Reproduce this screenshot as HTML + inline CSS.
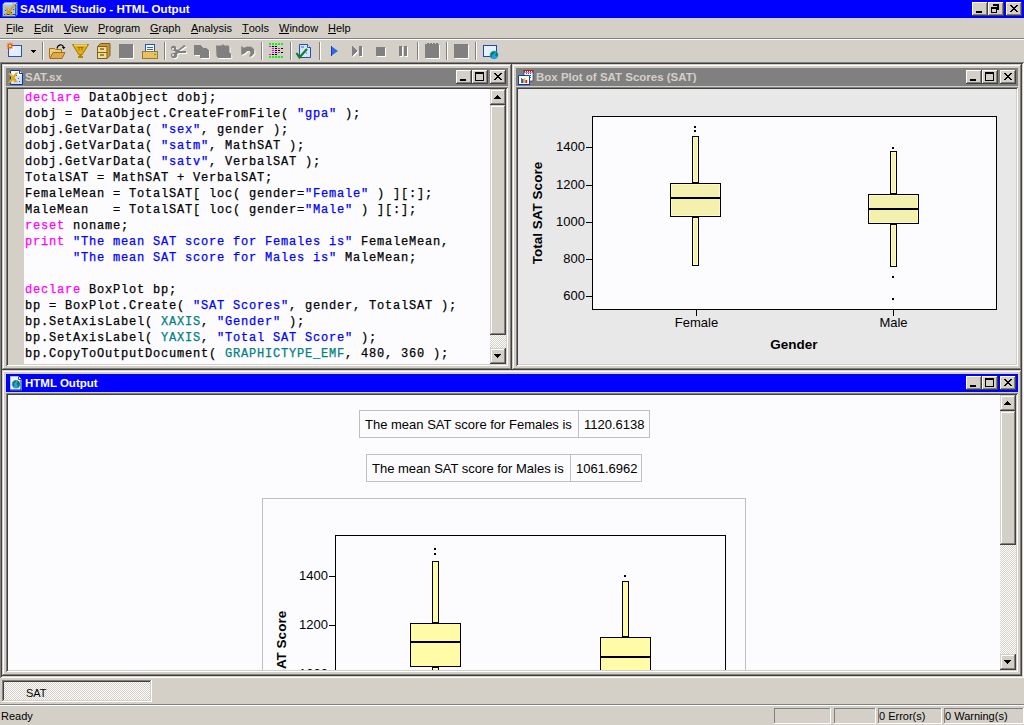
<!DOCTYPE html>
<html><head><meta charset="utf-8">
<style>
*{margin:0;padding:0;box-sizing:border-box}
html,body{width:1024px;height:725px;overflow:hidden;background:#d4d0c8;font-family:"Liberation Sans",sans-serif;font-size:11px;color:#000}
.a{position:absolute}
.raised{box-shadow:inset -1px -1px #404040,inset 1px 1px #d4d0c8,inset -2px -2px #808080,inset 2px 2px #fff;background:#d4d0c8}
.btn{box-shadow:inset -1px -1px #404040,inset 1px 1px #fff,inset -2px -2px #808080;background:#d4d0c8}
.sunken{box-shadow:inset 1px 1px #808080,inset -1px -1px #fff,inset 2px 2px #404040,inset -2px -2px #d4d0c8}
.thin{box-shadow:inset -1px -1px #fff,inset 1px 1px #808080}
.dither{background-color:#d4d0c8;background-image:repeating-conic-gradient(#fff 0 25%,#d4d0c8 0 50%);background-size:2px 2px}
.cap{font-weight:bold;font-size:11.5px;line-height:13px;white-space:nowrap}
.menu span{position:absolute;top:21px;line-height:14px;white-space:nowrap}
.menu u{text-decoration:none;border-bottom:1px solid #000;display:inline-block;line-height:10px;height:11px}
.u{text-decoration:underline;text-underline-offset:2px}
pre{font-family:"Liberation Mono",monospace;font-size:12px;letter-spacing:0.8px;line-height:16px;-webkit-text-stroke:0.25px currentColor}
.k{color:#ff00ff}.s{color:#0000ff}.c{color:#008080}
</style></head><body>
<!-- App title bar -->
<div class="a" style="left:0;top:0;width:1024px;height:18px;background:#0000ff"></div>
<svg class="a" style="left:2px;top:1px" width="16" height="16">
<path d="M0.5 3.5l2-2h13v12l-2 2h-13z" fill="#a4c4ee" stroke="#2a5cb8" stroke-width="1"/>
<path d="M1 3.5l2-2h12.5l-2 2z" fill="#d4e4fa"/>
<path d="M13.5 3.5v12M13.5 3.5l2-2" stroke="#2a5cb8" stroke-width="1" fill="none"/>
<path d="M14 4h1v10h-1z" fill="#6e98d8"/>
<path d="M2 13.5h11.5" stroke="#0a3c9c"/>
<path d="M2.5 6h3.5l1.6 2.6 2-2.6h2.2l-3.2 3.8 2.8 4.7h-3.4l-1.5-2.7-2.2 2.7H2l3.4-4.3z" fill="#d8980a"/>
<path d="M3.5 6.8h2l1.8 3" stroke="#f8d048" stroke-width="0.9" fill="none"/>
<path d="M10 2.5h2.6q1 0.3 0.5 1.5l-1.5 1.5h2v1.2h-3.8v-1l1.8-1.9q0.3-0.5-0.3-0.5h-1.4z" fill="#e0a410"/>
<path d="M9 11h1v1H9zM11 8h1v1h-1zM3 9h1v1H3z" fill="#1a4cb0"/>
</svg>
<div class="a cap" style="left:20px;top:2px;color:#fff;font-size:11.6px">SAS/IML Studio - HTML Output</div>
<div class="a btn" style="left:972px;top:2px;width:16px;height:14px"></div><svg class="a" style="left:972px;top:2px" width="16" height="14" shape-rendering="crispEdges"><path d="M4 9h6v2H4z"/></svg>
<div class="a btn" style="left:988px;top:2px;width:16px;height:14px"></div><svg class="a" style="left:988px;top:2px" width="16" height="14" shape-rendering="crispEdges"><path d="M5 2h6v6H9V4H5zM3 5h6v6H3zM4 7v3h4V7z" fill-rule="evenodd"/></svg>
<div class="a btn" style="left:1006px;top:2px;width:16px;height:14px"></div><svg class="a" style="left:1006px;top:2px" width="16" height="14" shape-rendering="crispEdges"><path d="M4 3h2v1h1v1h2V4h1V3h2v1h-1v1h-1v1h-1v1h1v1h1v1h1v1h-2V9H9V8H7v1H6v1H4V9h1V8h1V7h1V6H6V5H5V4H4z"/></svg>


<!-- Menu -->
<div class="a menu" style="left:0;top:0;width:1024px;height:38px">
<span style="left:6px"><u>F</u>ile</span><span style="left:34px"><u>E</u>dit</span><span style="left:64px"><u>V</u>iew</span><span style="left:98px"><u>P</u>rogram</span><span style="left:150px"><u>G</u>raph</span><span style="left:191px"><u>A</u>nalysis</span><span style="left:242px"><u>T</u>ools</span><span style="left:279px"><u>W</u>indow</span><span style="left:328px"><u>H</u>elp</span>
</div>
<div class="a" style="left:0;top:38px;width:1024px;height:1px;background:#808080"></div>
<div class="a" style="left:0;top:39px;width:1024px;height:1px;background:#fff"></div>

<!-- Toolbar -->
<svg class="a" style="left:0;top:40px" width="510" height="22" shape-rendering="crispEdges">
<rect x="42" y="2" width="1" height="18" fill="#808080"/><rect x="43" y="2" width="1" height="18" fill="#fff"/>
<rect x="164" y="2" width="1" height="18" fill="#808080"/><rect x="165" y="2" width="1" height="18" fill="#fff"/>
<rect x="261" y="2" width="1" height="18" fill="#808080"/><rect x="262" y="2" width="1" height="18" fill="#fff"/>
<rect x="290" y="2" width="1" height="18" fill="#808080"/><rect x="291" y="2" width="1" height="18" fill="#fff"/>
<rect x="319" y="2" width="1" height="18" fill="#808080"/><rect x="320" y="2" width="1" height="18" fill="#fff"/>
<rect x="417" y="2" width="1" height="18" fill="#808080"/><rect x="418" y="2" width="1" height="18" fill="#fff"/>
<rect x="446" y="2" width="1" height="18" fill="#808080"/><rect x="447" y="2" width="1" height="18" fill="#fff"/>
<rect x="475" y="2" width="1" height="18" fill="#808080"/><rect x="476" y="2" width="1" height="18" fill="#fff"/>
<g transform="translate(1,1)" fill="#fff"><rect x="119" y="4" width="14" height="14"/></g><g fill="#808080"><rect x="119" y="4" width="14" height="14"/></g>
<g transform="translate(1,1)" fill="#fff"><rect x="454" y="4" width="14" height="14"/></g><g fill="#808080"><rect x="454" y="4" width="14" height="14"/></g>
<g transform="translate(1,1)" fill="#fff"><path d="M425 4h14v14h-14z M427 3h2v1h-2z M430 3h2v1h-2z M433 3h2v1h-2z M436 3h2v1h-2z"/></g><g fill="#808080"><path d="M425 4h14v14h-14z M427 3h2v1h-2z M430 3h2v1h-2z M433 3h2v1h-2z M436 3h2v1h-2z"/></g>
<g transform="translate(1,1)" fill="#fff"><rect x="376" y="7" width="9" height="9"/></g><g fill="#808080"><rect x="376" y="7" width="9" height="9"/></g>
<g transform="translate(1,1)" fill="#fff"><path d="M399 6h3v10h-3z M404 6h3v10h-3z"/></g><g fill="#808080"><path d="M399 6h3v10h-3z M404 6h3v10h-3z"/></g>
<g transform="translate(1,1)" fill="#fff"><path d="M352 6v10l6-5z M359 6h3v10h-3z"/></g><g fill="#808080"><path d="M352 6v10l6-5z M359 6h3v10h-3z"/></g>
<g transform="translate(1,1)" fill="#fff"><path d="M194 5h6l3 3h3l3 3v7h-9v-3h-6z"/></g><g fill="#808080"><path d="M194 5h6l3 3h3l3 3v7h-9v-3h-6z"/></g>
<g transform="translate(1,1)" fill="#fff"><path d="M216 5.5h5.5l1-1h1l1 1h4l1 1.5v5.3l1.7 1.7v4h-13l-1.7-1.7z" shape-rendering="auto"/></g><g fill="#808080"><path d="M216 5.5h5.5l1-1h1l1 1h4l1 1.5v5.3l1.7 1.7v4h-13l-1.7-1.7z" shape-rendering="auto"/></g>
<g transform="translate(1,1)" fill="#fff"><path d="M184 5l2 1-7 5 7 0v2h-7l-2 1q1 3-2 4t-4-2 3-3l2-1-2-1q-3 0-3-3t4-2q2 1 1 3l2 1zM173 8a1 1 0 1 0 0.1 0zM173 14a1 1 0 1 0 0.1 0z" fill-rule="evenodd" shape-rendering="auto"/></g><g fill="#808080"><path d="M184 5l2 1-7 5 7 0v2h-7l-2 1q1 3-2 4t-4-2 3-3l2-1-2-1q-3 0-3-3t4-2q2 1 1 3l2 1zM173 8a1 1 0 1 0 0.1 0zM173 14a1 1 0 1 0 0.1 0z" fill-rule="evenodd" shape-rendering="auto"/></g>
<g transform="translate(1,1)" fill="#fff"><path d="M241.3 6.1l2.7 1.7 3.4-1.4 4.1 0.4 2.8 2.7v4.1l-2.8 2.8-2 0.3v-1.4l1.3-2.4-1.3-2h-2.1l-2.7 2.7-3.4 1.4z" shape-rendering="auto"/></g><g fill="#808080"><path d="M241.3 6.1l2.7 1.7 3.4-1.4 4.1 0.4 2.8 2.7v4.1l-2.8 2.8-2 0.3v-1.4l1.3-2.4-1.3-2h-2.1l-2.7 2.7-3.4 1.4z" shape-rendering="auto"/></g>
<path d="M331 6v10l7-5z" fill="#2a6ae8" shape-rendering="auto"/><path d="M331 6v10l1-1v-8z" fill="#1040b0"/>
<rect x="269" y="3" width="2" height="2" fill="#00ff00"/><rect x="269" y="16" width="2" height="2" fill="#00ff00"/>
<rect x="272" y="3" width="2" height="2" fill="#00ff00"/><rect x="272" y="16" width="2" height="2" fill="#00ff00"/>
<rect x="275" y="3" width="2" height="2" fill="#00ff00"/><rect x="275" y="16" width="2" height="2" fill="#00ff00"/>
<rect x="278" y="3" width="2" height="2" fill="#00ff00"/><rect x="278" y="16" width="2" height="2" fill="#00ff00"/>
<rect x="281" y="3" width="2" height="2" fill="#00ff00"/><rect x="281" y="16" width="2" height="2" fill="#00ff00"/>
<rect x="269" y="6" width="2" height="1" fill="#ff00ff"/>
<rect x="272" y="6" width="2" height="1" fill="#000"/>
<rect x="275" y="6" width="2" height="1" fill="#000"/>
<rect x="272" y="8" width="2" height="1" fill="#ff00ff"/>
<rect x="275" y="8" width="2" height="1" fill="#000"/>
<rect x="278" y="8" width="2" height="1" fill="#ff00ff"/>
<rect x="281" y="8" width="2" height="1" fill="#000"/>
<rect x="272" y="10" width="2" height="1" fill="#ff00ff"/>
<rect x="275" y="10" width="2" height="1" fill="#000"/>
<rect x="278" y="10" width="2" height="1" fill="#000"/>
<rect x="272" y="12" width="2" height="1" fill="#ff00ff"/>
<rect x="275" y="12" width="2" height="1" fill="#000"/>
<rect x="278" y="12" width="2" height="1" fill="#ff00ff"/>
<rect x="281" y="12" width="2" height="1" fill="#000"/>
<rect x="269" y="14" width="2" height="1" fill="#ff00ff"/>
<rect x="272" y="14" width="2" height="1" fill="#000"/>
<rect x="275" y="14" width="2" height="1" fill="#000"/>
<rect x="8" y="5" width="14" height="12" fill="#2850c8"/><rect x="9" y="6" width="12" height="10" fill="#e6eefb"/><rect x="9" y="6" width="5" height="4" fill="#fff"/>
<g shape-rendering="auto" stroke="#f06018" stroke-width="1.2"><path d="M10 2.5v7M6.5 6h7M7.5 3.5l5 5M12.5 3.5l-5 5"/></g><circle cx="10" cy="6" r="1.3" fill="#ffe060"/>
<path d="M31 10h5v1h-1v1h-1v1h-1v-1h-1v-1h-1z" fill="#000"/>
<g shape-rendering="auto"><path d="M49.5 8.5h5l1 1h6v8h-12z" fill="#f0d070" stroke="#a07020"/><path d="M50 18.5l3-6h12l-3 6z" fill="#e0a848" stroke="#a07020"/><path d="M57 8.5q1-4 4.5-3.5q1.5 0.3 2 2" fill="none" stroke="#000" stroke-width="1.2"/><path d="M61.8 7h3.7l-1.8 2.2z" fill="#000"/></g>
<g shape-rendering="auto"><path d="M72.5 4.5h16l-6.2 10h-3.6z" fill="#e0ae18" stroke="#a07800" stroke-width="1"/><path d="M74 5h13" stroke="#fff0a0" stroke-width="1"/><path d="M77.5 7.5h6M79 7.5v3M82 7.5v3" stroke="#9a7000" stroke-width="0.9"/><path d="M79.2 14h2.6v2h1.2v2h-5v-2h1.2z" fill="#b88400"/></g>
<g shape-rendering="auto"><path d="M97.5 6.5l3-3h9.5v12l-3 3h-9.5z" fill="#c89838" stroke="#806020"/><path d="M97.5 6.5h9.5v12h-9.5z" fill="#f4dc8c" stroke="#806020"/><path d="M97.5 12.5h9.5" stroke="#806020"/><path d="M100 9h4M100 15h4" stroke="#403010" stroke-width="1"/></g>
<rect x="145" y="4" width="10" height="8" fill="#2050d0"/><rect x="146" y="5" width="8" height="7" fill="#fff"/><rect x="147" y="7" width="6" height="1" fill="#3060e0"/><rect x="147" y="9" width="6" height="1" fill="#3060e0"/>
<rect x="142" y="11" width="16" height="8" fill="#a07828"/><rect x="143" y="12" width="14" height="6" fill="#e8c060"/><rect x="154" y="14" width="2" height="1" fill="#20c040"/>
<g shape-rendering="auto"><path d="M299.5 4.5h8l3 3v10h-11z" fill="#d8e6fb" stroke="#2050c0"/><path d="M307.5 4.5v3h3" fill="#fff" stroke="#2050c0"/><path d="M301 7h3M305 10h1M306 13h1" stroke="#3060d0"/><path d="M296.5 13l3 4.5 7.5-8.5" fill="none" stroke="#108020" stroke-width="2.2"/></g>
<rect x="483" y="5" width="14" height="12" fill="#1848c0"/><rect x="484" y="6" width="12" height="10" fill="#e8f0fc"/>
<g shape-rendering="auto"><circle cx="494" cy="15" r="4.3" fill="#20a0f0"/><path d="M491 13q2-2 4-1l-1 2-2 1v2l-1 1q-1-2 0-5zM495.5 11.5q2 1 2.5 3l-1 2-2-1 1-2z" fill="#108040"/></g>
</svg>
<!-- MDI client edge -->
<div class="a sunken" style="left:0;top:62px;width:1024px;height:616px"></div>

<!-- SAT.sx window -->
<div class="a raised" style="left:2px;top:64px;width:510px;height:306px"></div>
<div class="a" style="left:6px;top:68px;width:502px;height:18px;background:#808080"></div>
<div class="a sunken" style="left:6px;top:87px;width:502px;height:279px;background:#fcfcfe"></div>
<svg class="a" style="left:8px;top:70px" width="16" height="16">
<path d="M2.5 0.5h9l3 3v11h-12z" fill="#cfe0fa" stroke="#0c34a8"/>
<path d="M3 1h8.5v2.5H14v2H3z" fill="#fff"/>
<path d="M11.5 0.5v3h3" fill="#fff" stroke="#0c34a8"/>
<path d="M8 5h1v1H8zM10 8h1v1h-1zM11 11h1v1h-1zM7 9h1v1H7z" fill="#3a6ad0"/>
<path d="M0 3.5h3.6l1.6 2.4 2.6-3.4h2.6L6.4 7.4l3.2 4.9H6.4L4.9 9.8 2.8 12.8H0l3.6-5z" fill="#e4a600"/>
<path d="M1 4.2h2.2l1.8 2.6" stroke="#ffd040" stroke-width="0.8" fill="none"/>
</svg>
<div class="a cap" style="left:25px;top:71px;color:#d4d0c8">SAT.sx</div>
<div class="a btn" style="left:456px;top:70px;width:16px;height:14px"></div><svg class="a" style="left:456px;top:70px" width="16" height="14" shape-rendering="crispEdges"><path d="M4 9h6v2H4z"/></svg>
<div class="a btn" style="left:472px;top:70px;width:16px;height:14px"></div><svg class="a" style="left:472px;top:70px" width="16" height="14" shape-rendering="crispEdges"><path d="M3 2h9v9H3zM4 4v6h7V4z" fill-rule="evenodd"/></svg>
<div class="a btn" style="left:490px;top:70px;width:16px;height:14px"></div><svg class="a" style="left:490px;top:70px" width="16" height="14" shape-rendering="crispEdges"><path d="M4 3h2v1h1v1h2V4h1V3h2v1h-1v1h-1v1h-1v1h1v1h1v1h1v1h-2V9H9V8H7v1H6v1H4V9h1V8h1V7h1V6H6V5H5V4H4z"/></svg>


<!-- SAT.sx content -->
<div class="a" style="left:8px;top:89px;width:16px;height:275px;background:#d4d0c8"></div>
<pre class="a" style="left:25px;top:90px;width:465px;height:274px;overflow:hidden"><span class="k">declare</span> DataObject dobj;
dobj = DataObject.CreateFromFile( <span class="s">"gpa"</span> );
dobj.GetVarData( <span class="s">"sex"</span>, gender );
dobj.GetVarData( <span class="s">"satm"</span>, MathSAT );
dobj.GetVarData( <span class="s">"satv"</span>, VerbalSAT );
TotalSAT = MathSAT + VerbalSAT;
FemaleMean = TotalSAT[ loc( gender=<span class="s">"Female"</span> ) ][:];
MaleMean   = TotalSAT[ loc( gender=<span class="s">"Male"</span> ) ][:];
<span class="k">reset</span> noname;
<span class="k">print</span> <span class="s">"The mean SAT score for Females is"</span> FemaleMean,
      <span class="s">"The mean SAT score for Males is"</span> MaleMean;

<span class="k">declare</span> BoxPlot bp;
bp = BoxPlot.Create( <span class="s">"SAT Scores"</span>, gender, TotalSAT );
bp.SetAxisLabel( <span class="c">XAXIS</span>, <span class="s">"Gender"</span> );
bp.SetAxisLabel( <span class="c">YAXIS</span>, <span class="s">"Total SAT Score"</span> );
bp.CopyToOutputDocument( <span class="c">GRAPHICTYPE_EMF</span>, 480, 360 );</pre>
<div class="a raised" style="left:490px;top:89px;width:16px;height:16px"></div>
<div class="a raised" style="left:490px;top:105px;width:16px;height:230px"></div>
<div class="a dither" style="left:490px;top:335px;width:16px;height:13px"></div>
<div class="a raised" style="left:490px;top:348px;width:16px;height:16px"></div>
<svg class="a" style="left:490px;top:89px" width="16" height="16"><path d="M7 6h1v1h1v1h1v1h1v1H4V9h1V8h1V7h1z" fill="#000"/></svg>
<svg class="a" style="left:490px;top:348px" width="16" height="16"><path d="M4 6h7v1h-1v1h-1v1h-1v1H7V9H6V8H5V7H4z" fill="#000"/></svg>

<!-- Box plot window -->
<div class="a raised" style="left:512px;top:64px;width:510px;height:306px"></div>
<div class="a" style="left:516px;top:68px;width:502px;height:18px;background:#808080"></div>
<div class="a sunken" style="left:516px;top:87px;width:502px;height:279px;background:#e8e8e8"></div>
<svg class="a" style="left:518px;top:70px" width="16" height="16">
<path d="M6 0h9v11H6z" fill="#fff" stroke="#202020" stroke-width="0.6"/>
<path d="M6 0h9v2.5H6z" fill="#b02020"/>
<path d="M7 1h1v1H7zM9 1h1v1H9zM11 1h1v1h-1zM13 1h1v1h-1z" fill="#fff"/>
<path d="M8 3h1v1H8zM10 3h1v1h-1zM12 3h1v1h-1zM12 5h1v1h-1zM12 7h1v1h-1z" fill="#1060f0"/>
<path d="M0.5 5.5h11v9h-11z" fill="#fff" stroke="#1040c0"/>
<path d="M0 14h12v1H0z" fill="#0030a0"/>
<path d="M3 8h0.8v5H3z" fill="#404040"/><path d="M3.8 9h1.8v4H3.8z" fill="#0060ff"/><path d="M5.6 8h1.8v5H5.6z" fill="#ffc000"/><path d="M7.4 10h1.8v3H7.4z" fill="#d02020"/>
</svg>
<div class="a cap" style="left:536px;top:71px;color:#d4d0c8">Box Plot of SAT Scores (SAT)</div>
<div class="a btn" style="left:966px;top:70px;width:16px;height:14px"></div><svg class="a" style="left:966px;top:70px" width="16" height="14" shape-rendering="crispEdges"><path d="M4 9h6v2H4z"/></svg>
<div class="a btn" style="left:982px;top:70px;width:16px;height:14px"></div><svg class="a" style="left:982px;top:70px" width="16" height="14" shape-rendering="crispEdges"><path d="M3 2h9v9H3zM4 4v6h7V4z" fill-rule="evenodd"/></svg>
<div class="a btn" style="left:1000px;top:70px;width:16px;height:14px"></div><svg class="a" style="left:1000px;top:70px" width="16" height="14" shape-rendering="crispEdges"><path d="M4 3h2v1h1v1h2V4h1V3h2v1h-1v1h-1v1h-1v1h1v1h1v1h1v1h-2V9H9V8H7v1H6v1H4V9h1V8h1V7h1V6H6V5H5V4H4z"/></svg>


<!-- box plot -->
<svg class="a" style="left:518px;top:89px" width="498" height="275" shape-rendering="crispEdges"><g transform="translate(-518,-89)">
<rect x="592" y="116" width="405" height="194" fill="#000"/><rect x="593" y="117" width="403" height="192" fill="#fcfcfe"/>
<rect x="586" y="147" width="6" height="1" fill="#000"/>
<text x="585" y="150.5" text-anchor="end" font-size="13" shape-rendering="auto">1400</text>
<rect x="586" y="185" width="6" height="1" fill="#000"/>
<text x="585" y="188.5" text-anchor="end" font-size="13" shape-rendering="auto">1200</text>
<rect x="586" y="222" width="6" height="1" fill="#000"/>
<text x="585" y="225.5" text-anchor="end" font-size="13" shape-rendering="auto">1000</text>
<rect x="586" y="259" width="6" height="1" fill="#000"/>
<text x="585" y="262.5" text-anchor="end" font-size="13" shape-rendering="auto">800</text>
<rect x="586" y="296" width="6" height="1" fill="#000"/>
<text x="585" y="299.5" text-anchor="end" font-size="13" shape-rendering="auto">600</text>
<rect x="696" y="310" width="1" height="6" fill="#000"/>
<text x="696.5" y="327" text-anchor="middle" font-size="13">Female</text>
<rect x="893" y="310" width="1" height="6" fill="#000"/>
<text x="893.5" y="327" text-anchor="middle" font-size="13">Male</text>
<text x="794" y="349" text-anchor="middle" font-size="13.5" font-weight="bold">Gender</text>
<text transform="translate(542,213) rotate(-90)" x="0" y="0" text-anchor="middle" font-size="13.5" font-weight="bold">Total SAT Score</text>
<rect x="692" y="136" width="7" height="47" fill="#000"/><rect x="693" y="137" width="5" height="45" fill="#fdfbc2"/><rect x="694" y="138" width="3" height="43" fill="#f3f1ad"/>
<rect x="692" y="217" width="7" height="49" fill="#000"/><rect x="693" y="218" width="5" height="47" fill="#fdfbc2"/><rect x="694" y="219" width="3" height="45" fill="#f3f1ad"/>
<rect x="670" y="183" width="51" height="34" fill="#000"/><rect x="671" y="184" width="49" height="32" fill="#fdfbc2"/><rect x="672" y="185" width="47" height="30" fill="#f3f1ad"/>
<rect x="671" y="197" width="49" height="2" fill="#000"/>
<rect x="694" y="126" width="2" height="2" fill="#000"/>
<rect x="694" y="130" width="2" height="2" fill="#000"/>
<rect x="890" y="151" width="7" height="43" fill="#000"/><rect x="891" y="152" width="5" height="41" fill="#fdfbc2"/><rect x="892" y="153" width="3" height="39" fill="#f3f1ad"/>
<rect x="890" y="224" width="7" height="43" fill="#000"/><rect x="891" y="225" width="5" height="41" fill="#fdfbc2"/><rect x="892" y="226" width="3" height="39" fill="#f3f1ad"/>
<rect x="868" y="194" width="51" height="30" fill="#000"/><rect x="869" y="195" width="49" height="28" fill="#fdfbc2"/><rect x="870" y="196" width="47" height="26" fill="#f3f1ad"/>
<rect x="869" y="208" width="49" height="2" fill="#000"/>
<rect x="892" y="147" width="2" height="2" fill="#000"/>
<rect x="892" y="276" width="2" height="2" fill="#000"/>
<rect x="892" y="298" width="2" height="2" fill="#000"/>
</g></svg>
<!-- HTML output window -->
<div class="a raised" style="left:2px;top:370px;width:1020px;height:306px"></div>
<div class="a" style="left:6px;top:374px;width:1012px;height:18px;background:#0000ff"></div>
<div class="a sunken" style="left:6px;top:393px;width:1012px;height:279px;background:#fcfcfe"></div>
<svg class="a" style="left:10px;top:376px" width="16" height="16">
<path d="M0.5 0.5h8l3 3v10.5h-11z" fill="#f0f6ff" stroke="#a8c4f0"/>
<path d="M8.5 0.5v3h3" fill="#fff" stroke="#3050b0"/>
<path d="M11 3v11H0" fill="none" stroke="#0a2a90"/>
<circle cx="6" cy="8.3" r="4.2" fill="#2a9ce8"/>
<path d="M3 6.5q1-2 3-2.2l-0.5 2 -1.5 1 0.5 2 -1 1.5q-1-1.5-0.5-4.3zM7 4.6q2 0.6 2.8 2.5l-0.3 3q-0.8 1.5-2 1.5l0.5-2-1.5-1.5 1-1.5z" fill="#1a7a3a"/>
</svg>
<div class="a cap" style="left:25px;top:377px;color:#fff">HTML Output</div>
<div class="a btn" style="left:966px;top:376px;width:16px;height:14px"></div><svg class="a" style="left:966px;top:376px" width="16" height="14" shape-rendering="crispEdges"><path d="M4 9h6v2H4z"/></svg>
<div class="a btn" style="left:982px;top:376px;width:16px;height:14px"></div><svg class="a" style="left:982px;top:376px" width="16" height="14" shape-rendering="crispEdges"><path d="M3 2h9v9H3zM4 4v6h7V4z" fill-rule="evenodd"/></svg>
<div class="a btn" style="left:1000px;top:376px;width:16px;height:14px"></div><svg class="a" style="left:1000px;top:376px" width="16" height="14" shape-rendering="crispEdges"><path d="M4 3h2v1h1v1h2V4h1V3h2v1h-1v1h-1v1h-1v1h1v1h1v1h1v1h-2V9H9V8H7v1H6v1H4V9h1V8h1V7h1V6H6V5H5V4H4z"/></svg>


<!-- html content -->
<div class="a" style="left:8px;top:395px;width:992px;height:275px;overflow:hidden">
<svg class="a" style="left:0;top:0" width="992" height="275" shape-rendering="crispEdges"><g transform="translate(-8,-395)">
<rect x="359" y="410" width="291" height="28" fill="#c0c0c0"/><rect x="360" y="411" width="289" height="26" fill="#fcfcfe"/>
<rect x="578" y="411" width="1" height="26" fill="#c0c0c0"/>
<rect x="366" y="454" width="276" height="28" fill="#c0c0c0"/><rect x="367" y="455" width="274" height="26" fill="#fcfcfe"/>
<rect x="570" y="455" width="1" height="26" fill="#c0c0c0"/>
<g font-size="13" shape-rendering="auto">
<text x="365" y="429">The mean SAT score for Females is</text><text x="584" y="429">1120.6138</text>
<text x="372" y="473">The mean SAT score for Males is</text><text x="576" y="473">1061.6962</text>
</g>
<rect x="262" y="498" width="484" height="403" fill="#c0c0c0"/><rect x="263" y="499" width="482" height="401" fill="#fcfcfe"/>
<rect x="335" y="535" width="391" height="255" fill="#000"/><rect x="336" y="536" width="389" height="253" fill="#fcfcfe"/>
<rect x="329" y="576" width="6" height="1" fill="#000"/>
<text x="328" y="579.5" text-anchor="end" font-size="13">1400</text>
<rect x="329" y="625" width="6" height="1" fill="#000"/>
<text x="328" y="628.5" text-anchor="end" font-size="13">1200</text>
<rect x="329" y="674" width="6" height="1" fill="#000"/>
<text x="328" y="677.5" text-anchor="end" font-size="13">1000</text>
<text transform="translate(286,662) rotate(-90)" text-anchor="middle" font-size="13.5" font-weight="bold">Total SAT Score</text>
<rect x="432" y="561" width="7" height="62" fill="#000"/><rect x="433" y="562" width="5" height="60" fill="#fffba6"/>
<rect x="432" y="667" width="7" height="54" fill="#000"/><rect x="433" y="668" width="5" height="52" fill="#fffba6"/>
<rect x="410" y="623" width="51" height="44" fill="#000"/><rect x="411" y="624" width="49" height="42" fill="#fffba6"/>
<rect x="411" y="641" width="49" height="2" fill="#000"/>
<rect x="434" y="548" width="2" height="2" fill="#000"/>
<rect x="434" y="553" width="2" height="2" fill="#000"/>
<rect x="622" y="581" width="7" height="56" fill="#000"/><rect x="623" y="582" width="5" height="54" fill="#fffba6"/>
<rect x="600" y="637" width="51" height="64" fill="#000"/><rect x="601" y="638" width="49" height="62" fill="#fffba6"/>
<rect x="601" y="656" width="49" height="2" fill="#000"/>
<rect x="624" y="575" width="2" height="2" fill="#000"/>
</g></svg></div>
<div class="a raised" style="left:1000px;top:395px;width:16px;height:16px"></div>
<div class="a raised" style="left:1000px;top:411px;width:16px;height:134px"></div>
<div class="a dither" style="left:1000px;top:545px;width:16px;height:109px"></div>
<div class="a raised" style="left:1000px;top:654px;width:16px;height:16px"></div>
<svg class="a" style="left:1000px;top:395px" width="16" height="16"><path d="M7 6h1v1h1v1h1v1h1v1H4V9h1V8h1V7h1z" fill="#000"/></svg>
<svg class="a" style="left:1000px;top:654px" width="16" height="16"><path d="M4 6h7v1h-1v1h-1v1h-1v1H7V9H6V8H5V7H4z" fill="#000"/></svg>
<!-- Tab bar -->
<div class="a dither" style="left:2px;top:680px;width:150px;height:22px;box-shadow:inset -1px -1px #fff,inset 1px 1px #808080,inset -2px -2px #d4d0c8,inset 2px 2px #404040"></div>
<div class="a" style="left:26px;top:686px;line-height:14px">SAT</div>

<!-- Status bar -->
<div class="a" style="left:0;top:704px;width:1024px;height:1px;background:#808080"></div>
<div class="a" style="left:0;top:705px;width:1024px;height:1px;background:#fff"></div>
<div class="a" style="left:1px;top:709px;line-height:14px">Ready</div>
<div class="a thin" style="left:774px;top:708px;width:57px;height:16px"></div>
<div class="a thin" style="left:834px;top:708px;width:42px;height:16px"></div>
<div class="a thin" style="left:878px;top:708px;width:64px;height:16px"></div>
<div class="a" style="left:879px;top:709px;line-height:14px">0 Error(s)</div>
<div class="a thin" style="left:944px;top:708px;width:80px;height:16px"></div>
<div class="a" style="left:945px;top:709px;line-height:14px">0 Warning(s)</div>
</body></html>
